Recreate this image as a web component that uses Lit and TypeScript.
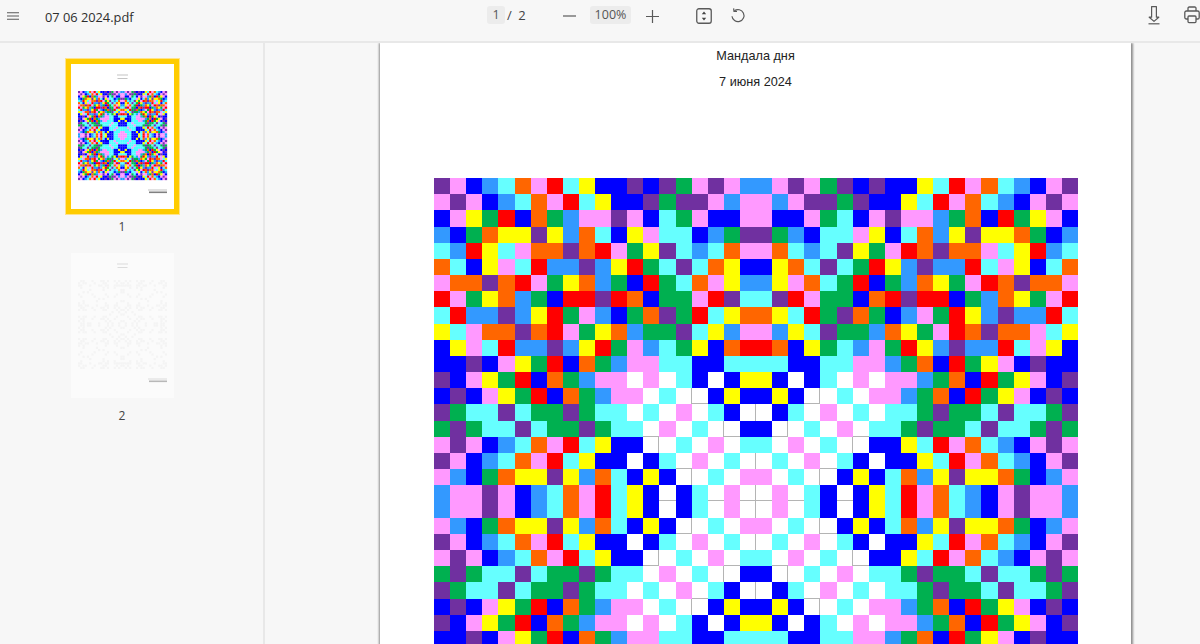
import { LitElement, html, css, svg } from "lit";
import { customElement } from "lit/decorators.js";

const QUADRANT = [
  "PKBLCOKRCYBBPBPGKPKL",
  "KPKBLCOKRCYBBPGPPKLK",
  "BKYGRBOGLKKPKBCGKBBK",
  "LBGOYYPYLOCBYKCCBLGP",
  "CLRYCKOOPORKGYPCLCOK",
  "OCBYKCRLLPLYRGCPCOYB",
  "KOOPORKGYOLGBRGCOKYL",
  "RKGYOLGBRRPROBGGKRPC",
  "CRLLPLYRGKLBGOPGRCYO",
  "YCKOOPORKGYOLGGPCYLK",
  "BYKCRLLPLYRGKLCGYBOR",
  "BBPBKYGRBOGLKKCCBBCC",
  "PBKYGRBOGLKKWKWCBWBY",
  "BPBKYGRBOGLKKWCWWBYB",
  "PGCCPCGGPGCCWCWKWCBW",
  "GPGCCPCGGPGCCWKWCWWB",
  "KPKBLCOKRCYBBWWCWKWC",
  "PKBLCOKRCYBBWBCWKWCW",
  "KLBGOYYPYLOCBYBWWCWK",
  "LKKPKBLCOKRCYBWBCWKW",
];

const mirrorRow = (r: string) => r + r.split("").reverse().join("");
const TOP = QUADRANT.map(mirrorRow);
const GRID = [...TOP, ...[...TOP].reverse()];

const COLORS: Record<string, string> = {
  P: "#7030a0",
  K: "#ff99ff",
  B: "#0000ff",
  L: "#3399ff",
  C: "#66ffff",
  O: "#ff6600",
  R: "#ff0000",
  Y: "#ffff00",
  G: "#00b050",
  W: "#ffffff",
};

const cellClass = (r: number, c: number) => {
  const v = GRID[r][c];
  let cls = `cell ${v}`;
  if (v === "W") {
    const right = GRID[r][c + 1] === "W";
    const below = GRID[r + 1]?.[c] === "W";
    if (right && below) cls += " edge-both";
    else if (right) cls += " edge-right";
    else if (below) cls += " edge-bottom";
  }
  return cls;
};

/* The thumbnail's downsampling swallows the white cells: each takes a neighbour's colour. */
const thumbColor = (r: number, c: number) => {
  const v = GRID[r][c];
  if (v !== "W") return COLORS[v];
  const near = [
    GRID[r - 1]?.[c],
    GRID[r][c - 1],
    GRID[r + 1]?.[c],
    GRID[r][c + 1],
  ].filter((n) => n && n !== "W");
  const pick = near.find((n) => n === "C") ?? near.find((n) => n === "K") ?? near[0];
  return pick ? COLORS[pick] : "#d8b4d8";
};

@customElement("app-root")
export class AppRoot extends LitElement {
  static styles = css`
    :host {
      display: block;
      width: 1200px;
      height: 644px;
      overflow: hidden;
      background: #f7f7f7;
      font-family: "Open Sans", "Noto Sans", sans-serif;
      color: #444;
    }
    .toolbar {
      height: 41px;
      border-bottom: 2px solid #e8e8e8;
      background: #f7f7f7;
      display: flex;
      align-items: flex-start;
      font-size: 12.5px;
    }
    .tool {
      display: block;
      flex: none;
    }
    .menu { margin: 12px 0 0 7px; }
    .filename {
      margin: 7px 0 0 26px;
      width: 442px;
      flex: none;
      font-size: 12.8px;
      line-height: 20px;
      color: #2e2e2e;
    }
    .field {
      background: #ececec;
      border-radius: 3px;
      height: 18px;
      line-height: 18px;
      text-align: center;
      margin-top: 6px;
      flex: none;
      color: #555;
    }
    .page-field { width: 18px; }
    .pager-text {
      margin: 6px 0 0 2px;
      line-height: 18px;
      width: 48px;
      flex: none;
      font-size: 13px;
      word-spacing: 3px;
    }
    .minus { margin: 15px 0 0 8px; }
    .zoom-field { width: 41px; margin-left: 14px; }
    .plus { margin: 10px 0 0 15px; }
    .fit { margin: 8px 0 0 37px; }
    .rotate { margin: 7px 0 0 18px; }
    .download { margin: 5px 0 0 401px; }
    .print { margin: 6px 0 0 23px; }

    .body {
      display: flex;
      height: 601px;
    }
    .sidebar {
      width: 244px;
      flex: none;
      border-right: 2px solid #e8e8e8;
      display: flex;
      flex-direction: column;
      align-items: center;
      padding: 15px 19px 0 0;
    }
    .thumb { display: flex; flex-direction: column; align-items: center; }
    .thumb-frame { display: block; }
    .thumb-frame.active {
      border: 6px solid #ffcc00;
      outline: 1px solid #ffe38a;
      outline-offset: -1px;
    }
    .mini { filter: blur(0.13px) saturate(1.2); }
    .thumb-label {
      font-size: 12px;
      line-height: 16px;
      color: #444;
    }
    .thumb-one .thumb-label { margin-top: 4px; margin-bottom: 18px; }
    .thumb-two .thumb-label { margin-top: 10px; }

    .main {
      flex: 1;
      overflow: hidden;
      padding: 0 0 0 115px;
      min-width: 0;
    }
    .page {
      width: 751px;
      height: 1100px;
      background: #fff;
      box-shadow: -1.5px 0 2px #8f8f8f, 1.5px 0 2px #8f8f8f;
      font-family: "Liberation Sans", Arial, sans-serif;
      font-size: 12.7px;
      color: #222;
      display: flex;
      flex-direction: column;
    }
    .title {
      text-align: center;
      line-height: 26px;
    }
    .mosaic {
      margin: 83px 0 0 54px;
      width: 644px;
      height: 647px;
      display: grid;
      grid-template-columns: repeat(40, 1fr);
      grid-template-rows: repeat(40, 1fr);
      flex: none;
      filter: blur(0.35px);
    }
    .cell { min-width: 0; min-height: 0; }
    .P { background: #7030a0; }
    .K { background: #ff99ff; }
    .B { background: #0000ff; }
    .L { background: #3399ff; }
    .C { background: #66ffff; }
    .O { background: #ff6600; }
    .R { background: #ff0000; }
    .Y { background: #ffff00; }
    .G { background: #00b050; }
    .W { background: #ffffff; }
    .edge-right { box-shadow: inset -1px 0 0 #b4b4b4; }
    .edge-bottom { box-shadow: inset 0 -1px 0 #b4b4b4; }
    .edge-both { box-shadow: inset -1px 0 0 #b4b4b4, inset 0 -1px 0 #b4b4b4; }
  `;

  private mini(faint: boolean) {
    const cells = [];
    for (let r = 0; r < 40; r++) {
      for (let c = 0; c < 40; c++) {
        const v = GRID[r][c];
        if (faint) {
          if (v === "B" || v === "K") {
            cells.push(svg`<rect x=${c} y=${r} width="1" height="1" fill="#f4f4f4"></rect>`);
          }
        } else {
          cells.push(svg`<rect x=${c} y=${r} width="1.06" height="1.06" fill=${thumbColor(r, c)}></rect>`);
        }
      }
    }
    return cells;
  }

  private thumbPage(faint: boolean) {
    const bg = faint ? "#fbfbfb" : "#ffffff";
    const line1 = faint ? "#dcdcdc" : "#c4c4c4";
    const line2 = faint ? "#b8b8b8" : "#808080";
    return html`<svg class="thumb-frame ${faint ? "idle" : "active"}" width="103" height="145" viewBox="0 0 103 145">
      <rect width="103" height="145" fill=${bg}></rect>
      <rect x="46" y="10.5" width="11" height="1" fill=${line1}></rect>
      <rect x="46.5" y="14" width="10" height="1" fill=${line1}></rect>
      <svg class="mini" x="7" y="27" width="89" height="89" viewBox="0 0 40 40">${this.mini(faint)}</svg>
      <rect x="77" y="125.5" width="19" height="1" fill=${line1}></rect>
      <rect x="78" y="127.5" width="18" height="1.6" fill=${line2}></rect>
    </svg>`;
  }

  render() {
    const stroke = "#5a5a5a";
    return html`
      <div class="toolbar">
        <svg class="tool menu" width="12" height="8" viewBox="0 0 12 8">
          <path d="M0 .75h12M0 4h12M0 7.25h12" stroke=${stroke} stroke-width="1.2" fill="none"></path>
        </svg>
        <div class="filename">07 06 2024.pdf</div>
        <div class="field page-field">1</div>
        <div class="pager-text">/ 2</div>
        <svg class="tool minus" width="13" height="2" viewBox="0 0 13 2">
          <path d="M0 1h13" stroke=${stroke} stroke-width="1.2"></path>
        </svg>
        <div class="field zoom-field">100%</div>
        <svg class="tool plus" width="13" height="13" viewBox="0 0 13 13">
          <path d="M0 6.5h13M6.5 0v13" stroke=${stroke} stroke-width="1.2"></path>
        </svg>
        <svg class="tool fit" width="16" height="16" viewBox="0 0 16 16">
          <rect x=".75" y=".75" width="14.5" height="14.5" rx="2.2" fill="none" stroke=${stroke} stroke-width="1.3"></rect>
          <path d="M8 3.4l2.2 2.9H5.8zM8 12.6l2.2-2.9H5.8z" fill="#444"></path>
        </svg>
        <svg class="tool rotate" width="16" height="17" viewBox="0 0 16 17">
          <path d="M4.4 3.8A6 6 0 1 1 2 9.2" fill="none" stroke=${stroke} stroke-width="1.2"></path>
          <path d="M3.6 1.4L4 4.4L7 4.4" fill="none" stroke=${stroke} stroke-width="1.2"></path>
        </svg>
        <svg class="tool download" width="14" height="20" viewBox="0 0 14 20">
          <path d="M4.6 1.6h4.8v10.6h2.4L7 16.4 2.2 12.2h2.4z" fill="none" stroke=${stroke} stroke-width="1.2" stroke-linejoin="round"></path>
          <path d="M1.5 18.8h11" stroke=${stroke} stroke-width="1.2"></path>
        </svg>
        <svg class="tool print" width="16" height="18" viewBox="0 0 16 18">
          <path d="M4 5V2.2A1.2 1.2 0 0 1 5.2 1h5.6A1.2 1.2 0 0 1 12 2.2V5" fill="none" stroke=${stroke} stroke-width="1.3"></path>
          <path d="M4 13H2.4A1.6 1.6 0 0 1 .8 11.4V6.6A1.6 1.6 0 0 1 2.4 5h11.2a1.6 1.6 0 0 1 1.6 1.6v4.8a1.6 1.6 0 0 1-1.6 1.6H12" fill="none" stroke=${stroke} stroke-width="1.3"></path>
          <rect x="4" y="10" width="8" height="6.6" rx="1" fill="none" stroke=${stroke} stroke-width="1.3"></rect>
        </svg>
      </div>
      <div class="body">
        <div class="sidebar">
          <div class="thumb thumb-one">
            ${this.thumbPage(false)}
            <div class="thumb-label">1</div>
          </div>
          <div class="thumb thumb-two">
            ${this.thumbPage(true)}
            <div class="thumb-label">2</div>
          </div>
        </div>
        <div class="main">
          <div class="page">
            <div class="title">Мандала дня</div>
            <div class="title">7 июня 2024</div>
            <div class="mosaic">
              ${GRID.map((row, r) =>
                row.split("").map((_, c) => html`<div class=${cellClass(r, c)}></div>`)
              )}
            </div>
          </div>
        </div>
      </div>
    `;
  }
}
